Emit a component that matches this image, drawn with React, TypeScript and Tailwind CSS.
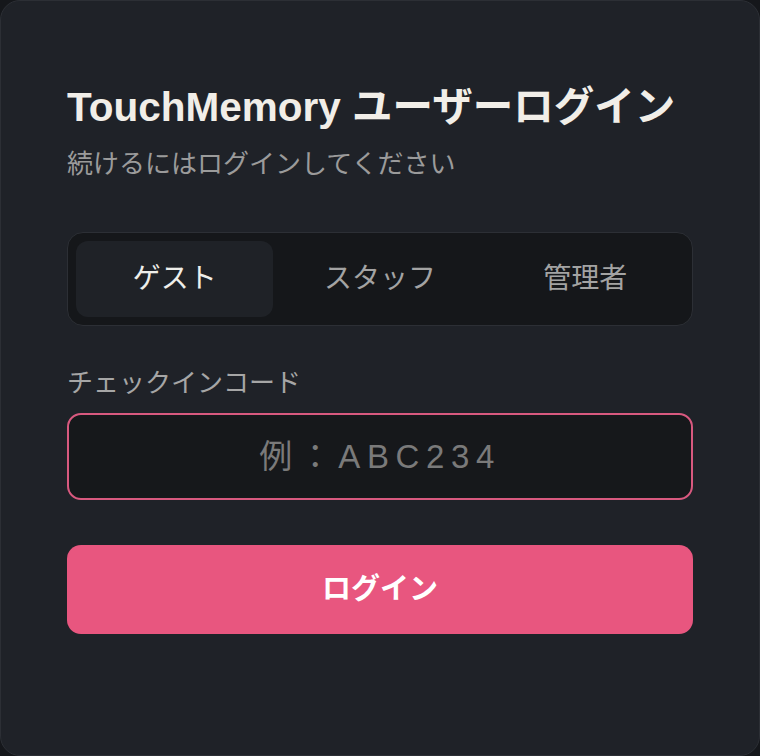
import { useState } from "react";

const TABS = ["ゲスト", "スタッフ", "管理者"];

const font = "font-['Liberation_Sans','Noto_Sans_CJK_JP',sans-serif]";

export default function App() {
  const [tab, setTab] = useState(0);
  const [code, setCode] = useState("");

  return (
    <div className={`min-h-screen bg-[#15171b] ${font}`}>
      <div className="h-[756px] rounded-[20px] border border-[#2c2f35] bg-[#1f2228] px-[66px] pt-[80px]">
        <h1 className="text-[40.5px] leading-[52px] font-bold text-[#f1eee8]">
          TouchMemory ユーザーログイン
        </h1>
        <p className="mt-[12px] text-[26px] leading-[38px] text-[#9b9b9b]">
          続けるにはログインしてください
        </p>

        <div className="mt-[49px] grid grid-cols-3 gap-2 rounded-[16px] border border-[#2c2f35] bg-[#15171a] p-2">
          {TABS.map((t, i) => (
            <button
              key={t}
              onClick={() => setTab(i)}
              className={
                i === tab
                  ? "h-[76px] rounded-[12px] bg-[#1f2227] text-[28px] text-[#eeeeea]"
                  : "h-[76px] rounded-[12px] text-[28px] text-[#a3a3a3]"
              }
            >
              {t}
            </button>
          ))}
        </div>

        <label className="mt-[39px] block text-[26px] leading-[36px] text-[#a6a6a6]">
          チェックインコード
        </label>
        <input
          value={code}
          onChange={(e) => setCode(e.target.value)}
          placeholder="例：ABC234"
          className="mt-[12px] block h-[87px] w-full rounded-[14px] border-2 border-[#d8597f] bg-[#16181b] text-center text-[33px] tracking-[0.2em] text-[#e5e5e5] outline-none placeholder:text-[#7a7a7a]"
        />

        <button className="mt-[45px] h-[89px] w-full rounded-[14px] bg-[#e8567f] text-[29px] font-bold text-white">
          ログイン
        </button>
      </div>
    </div>
  );
}
